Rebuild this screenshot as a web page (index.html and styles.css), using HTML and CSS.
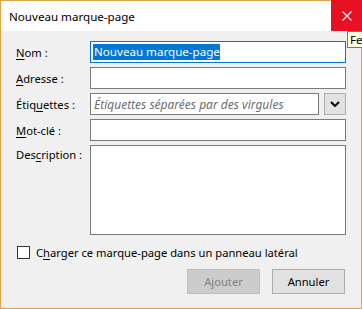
FILE: index.html
```html
<!DOCTYPE html>
<html lang="fr">
<head>
<meta charset="utf-8">
<link rel="stylesheet" href="styles.css">
</head>
<body>
<div class="window">
  <div class="titlebar">
    <span class="title">Nouveau marque-page</span>
    <div class="close">
      <svg width="10" height="10" viewBox="0 0 10 10"><path d="M0.5 0.5 L9.5 9.5 M9.5 0.5 L0.5 9.5" stroke="#fff" stroke-width="1.1" fill="none"/></svg>
    </div>
  </div>
  <div class="tooltip">Fe</div>
  <div class="content">
    <div class="form">
      <label class="lbl"><u>N</u>om :</label>
      <div class="field focused"><span class="sel">Nouveau marque-page</span></div>

      <label class="lbl"><u>A</u>dresse :</label>
      <div class="field"></div>

      <label class="lbl">Étiq<u>u</u>ettes :</label>
      <div class="tagrow">
        <div class="field grow"><span class="ph">Étiquettes séparées par des virgules</span></div>
        <div class="drop">
          <svg width="10" height="6" viewBox="0 0 10 6"><path d="M1 1 L5 5 L9 1" stroke="#000" stroke-width="2" fill="none"/></svg>
        </div>
      </div>

      <label class="lbl"><u>M</u>ot-clé :</label>
      <div class="field"></div>

      <label class="lbl top">Des<u>c</u>ription :</label>
      <div class="field area"></div>
    </div>
    <div class="check">
      <span class="box"></span>
      <span>C<u>h</u>arger ce marque-page dans un panneau latéral</span>
    </div>
    <div class="buttons">
      <div class="btn disabled">Ajouter</div>
      <div class="btn">Annuler</div>
    </div>
  </div>
</div>
</body>
</html>
```

FILE: styles.css
```css
html, body {
  margin: 0;
  padding: 0;
  background: #ffffff;
}
body {
  font-family: "Noto Sans", "Open Sans", sans-serif;
  font-size: 11.2px;
  color: #000;
  overflow: hidden;
}
.window {
  position: relative;
  width: 362px;
  height: 309px;
  box-sizing: border-box;
  border: 1px solid #e2a24a;
  display: flex;
  flex-direction: column;
  background: #f0f0f0;
}
.titlebar {
  height: 30px;
  background: #ffffff;
  display: flex;
  align-items: center;
  justify-content: space-between;
  flex: none;
  font-size: 11.6px;
}
.title {
  padding-left: 8px;
  padding-top: 1px;
}
.close {
  width: 31px;
  height: 31px;
  margin-top: -1px;
  margin-right: -1px;
  background: #e81123;
  display: flex;
  align-items: center;
  justify-content: center;
}
.tooltip {
  position: absolute;
  left: 346px;
  top: 30px;
  width: 15px;
  height: 15px;
  padding: 0 0 0 2px;
  line-height: 15px;
  background: #ffffe1;
  border: 1px solid #767676;
  border-right: none;
  white-space: nowrap;
  font-size: 11.6px;
}
.content {
  flex: 1;
  padding: 10px 15px 0 15px;
  display: flex;
  flex-direction: column;
}
.form {
  display: grid;
  grid-template-columns: 74px 1fr;
  row-gap: 4px;
}
.lbl {
  display: flex;
  align-items: center;
  height: 22px;
  white-space: nowrap;
}
.lbl.top {
  align-items: flex-start;
  padding-top: 2px;
}
.field {
  height: 22px;
  box-sizing: border-box;
  border: 1px solid #7a7a7a;
  background: #fff;
  display: flex;
  align-items: center;
  padding-left: 2px;
  overflow: hidden;
  white-space: nowrap;
}
.field.focused {
  border-color: #0078d7;
}
.sel {
  background: #0078d7;
  color: #fff;
  line-height: 16px;
  padding: 0 0 0 1px;
  font-size: 11.6px;
}
.tagrow {
  display: flex;
  gap: 5px;
}
.grow {
  flex: 1;
}
.ph {
  font-style: italic;
  color: #6d6d6d;
  padding-left: 1px;
  font-size: 12px;
}
.drop {
  width: 22px;
  height: 22px;
  box-sizing: border-box;
  border: 1px solid #adadad;
  background: #e1e1e1;
  display: flex;
  align-items: center;
  justify-content: center;
}
.field.area {
  height: 90px;
}
.check {
  display: flex;
  align-items: center;
  gap: 6px;
  margin-top: 10px;
  padding-left: 1px;
  height: 14px;
}
.box {
  width: 13px;
  height: 13px;
  box-sizing: border-box;
  border: 1px solid #333;
  background: #fff;
}
.buttons {
  display: flex;
  justify-content: flex-end;
  gap: 12px;
  margin-top: 10px;
  padding-right: 1px;
}
.btn {
  width: 73px;
  height: 25px;
  box-sizing: border-box;
  border: 1px solid #adadad;
  background: #e1e1e1;
  display: flex;
  align-items: center;
  justify-content: center;
}
.btn.disabled {
  background: #cccccc;
  border-color: #bfbfbf;
  color: #838383;
}
u {
  text-decoration-thickness: 1px;
  text-underline-offset: 2px;
}
```
